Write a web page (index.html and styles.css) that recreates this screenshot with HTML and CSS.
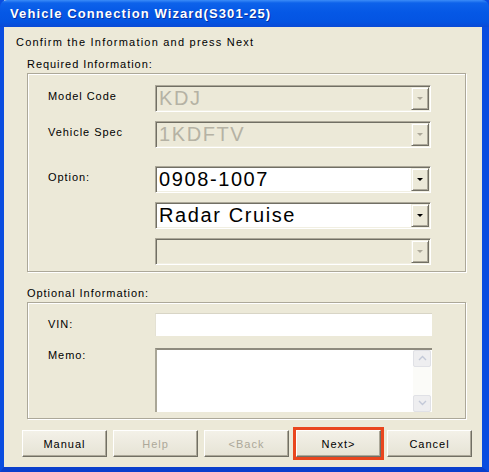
FILE: index.html
```html
<!DOCTYPE html>
<html>
<head>
<meta charset="utf-8">
<link rel="stylesheet" href="styles.css">
</head>
<body>
<div class="window">
  <div class="titlebar"><span class="title">Vehicle Connection Wizard(S301-25)</span></div>
  <div class="content">
    <div class="instruction">Confirm the Information and press Next</div>

    <div class="group-label">Required Information:</div>
    <div class="group required">
      <div class="label">Model Code</div>
      <div class="combo disabled"><span class="value">KDJ</span><span class="drop"><i class="arrow"></i></span></div>
      <div class="label">Vehicle Spec</div>
      <div class="combo disabled"><span class="value">1KDFTV</span><span class="drop"><i class="arrow"></i></span></div>
      <div class="label option-label">Option:</div>
      <div class="combo option-first"><span class="value">0908-1007</span><span class="drop"><i class="arrow"></i></span></div>
      <div class="label"></div>
      <div class="combo"><span class="value">Radar Cruise</span><span class="drop"><i class="arrow"></i></span></div>
      <div class="label"></div>
      <div class="combo disabled"><span class="value"></span><span class="drop"><i class="arrow"></i></span></div>
    </div>

    <div class="group-label optional-label">Optional Information:</div>
    <div class="group optional">
      <div class="label">VIN:</div>
      <div class="textfield"></div>
      <div class="label memo-label">Memo:</div>
      <div class="memo">
        <div class="memo-text"></div>
        <div class="scrollbar">
          <span class="sbtn"><svg width="9" height="6" viewBox="0 0 9 6"><path d="M1 5 L4.5 1.5 L8 5" fill="none" stroke="#c3c9d8" stroke-width="1.4"/></svg></span>
          <span class="track"></span>
          <span class="sbtn"><svg width="9" height="6" viewBox="0 0 9 6"><path d="M1 1 L4.5 4.5 L8 1" fill="none" stroke="#c3c9d8" stroke-width="1.4"/></svg></span>
        </div>
      </div>
    </div>

    <div class="buttons">
      <div class="btn">Manual</div>
      <div class="btn off">Help</div>
      <div class="btn off">&lt;Back</div>
      <div class="btn next">Next&gt;</div>
      <div class="btn">Cancel</div>
    </div>
  </div>
</div>
</body>
</html>
```
FILE: styles.css
```css
html, body {
  margin: 0;
  padding: 0;
  background: #ece9d8;
}
.window {
  width: 489px;
  height: 472px;
  box-sizing: border-box;
  display: flex;
  flex-direction: column;
  border-left: 4px solid #0a4de0;
  border-right: 7px solid #0a4de0;
  border-bottom: 5px solid #0a3fcc;
  font-family: "Liberation Sans", Arial, sans-serif;
  color: #000;
}
.titlebar {
  height: 27px;
  margin-left: -4px;
  margin-right: -7px;
  padding-left: 10px;
  display: flex;
  align-items: center;
  border-radius: 7px 7px 0 0;
  background: linear-gradient(#3b8cf8 0, #0d62ea 3px, #0558e6 45%, #0454e2 80%, #0a4ad6 100%);
}
.title {
  color: #fff;
  font-weight: bold;
  font-size: 13px;
  letter-spacing: 1.1px;
  text-shadow: 1px 1px 0 #0a2f9e;
}
.content {
  flex: 1;
  background: #ece9d8;
  padding: 8px 0 0 0;
  display: flex;
  flex-direction: column;
  font-size: 11px;
  letter-spacing: 0.95px;
}
.instruction {
  margin-left: 12px;
  font-size: 11px;
  letter-spacing: 1.22px;
  line-height: 14px;
}
.group-label {
  margin: 8px 0 0 23px;
  line-height: 14px;
}
.optional-label {
  margin-top: 14px;
}
.group {
  margin: 2px 0 0 23px;
  width: 439px;
  box-sizing: border-box;
  border: 1px solid #aca899;
  box-shadow: inset 1px 1px 0 #fff, 1px 1px 0 #fff;
  display: grid;
  grid-template-columns: 107px 276px;
  row-gap: 9px;
}
.required {
  padding: 11px 0 6px 20px;
  height: 199px;
}
.optional {
  padding: 10px 0 6px 20px;
  row-gap: 11px;
  height: 117px;
}
.label {
  padding-top: 4px;
  line-height: 14px;
}
.option-label, .option-first {
  margin-top: 9px;
}
.memo-label {
  padding-top: 0;
}
.combo {
  height: 27px;
  box-sizing: border-box;
  display: flex;
  align-items: stretch;
  border: 1px solid;
  border-color: #aca899 #fff #fff #aca899;
  box-shadow: inset 1px 1px 0 #716f64, inset -1px -1px 0 #f1efe2;
  background: #fff;
  padding: 1px;
}
.combo.disabled {
  background: #ece9d8;
}
.value {
  flex: 1;
  font-size: 20px;
  letter-spacing: 1.6px;
  line-height: 23px;
  padding-left: 2px;
  color: #000;
}
.disabled .value {
  color: #b5b2a4;
}
.drop {
  width: 18px;
  box-sizing: border-box;
  background: #ece9d8;
  border: 1px solid;
  border-color: #f1efe2 #716f64 #716f64 #f1efe2;
  box-shadow: inset 1px 1px 0 #fff, inset -1px -1px 0 #aca899;
  display: flex;
  align-items: center;
  justify-content: center;
}
.arrow {
  width: 0;
  height: 0;
  border-left: 3px solid transparent;
  border-right: 3px solid transparent;
  border-top: 3px solid #000;
}
.disabled .arrow {
  border-top-color: #aca899;
}
.textfield {
  height: 23px;
  width: 277px;
  box-sizing: border-box;
  background: #fff;
  border-top: 1px solid #d8d5c6;
  border-left: 1px solid #e4e1d3;
}
.memo {
  height: 64px;
  width: 277px;
  box-sizing: border-box;
  display: flex;
  background: #fff;
  border-top: 2px solid #8e8b7e;
  border-left: 2px solid #a9a697;
}
.memo-text {
  flex: 1;
}
.scrollbar {
  width: 18px;
  margin-right: 1px;
  display: flex;
  flex-direction: column;
  background: #fbfbf8;
}
.sbtn {
  height: 17px;
  box-sizing: border-box;
  display: flex;
  align-items: center;
  justify-content: center;
  background: #eeeef0;
  border: 1px solid #e0e1e6;
  border-radius: 2px;
}
.track {
  flex: 1;
}
.buttons {
  display: flex;
  margin: 11px 0 0 18px;
  gap: 6px;
}
.btn {
  width: 85px;
  height: 27px;
  box-sizing: border-box;
  display: flex;
  align-items: center;
  justify-content: center;
  font-size: 11px;
  letter-spacing: 1px;
  background: linear-gradient(#f3f1e8, #e6e3d5);
  border: 1px solid;
  border-color: #fff #716f64 #716f64 #fff;
  box-shadow: inset -1px -1px 0 #aca899;
}
.btn.off {
  color: #aca899;
}
.btn.next {
  margin-left: 1px;
  outline: 3px solid #e9461e;
  outline-offset: 0;
}
```
